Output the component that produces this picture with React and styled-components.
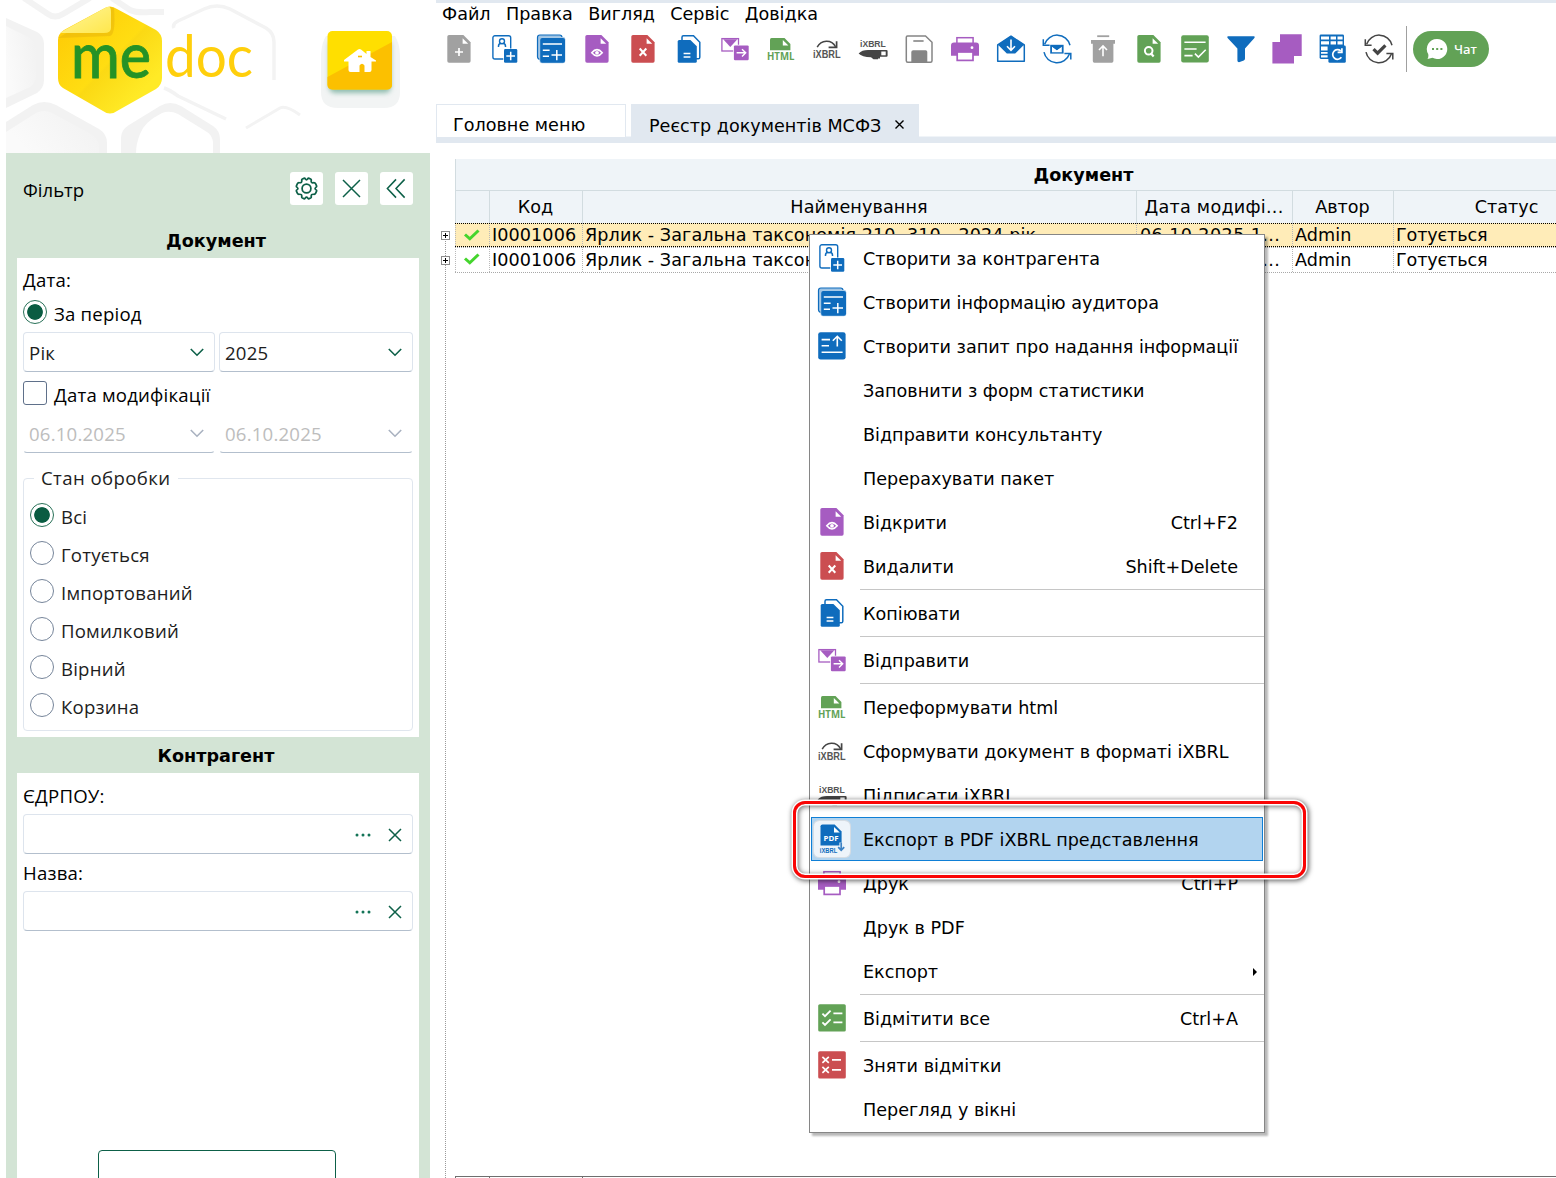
import { useState } from 'react';
import styled, { createGlobalStyle, css } from 'styled-components';

const BLUE = '#0f6cbd';
const PURPLE = '#a65cc1';
const GREEN = '#62a256';
const RED = '#cb4e51';
const GREY = '#a1a1a1';
const DARK = '#454545';

const GlobalStyle = createGlobalStyle`
  * {
    box-sizing: border-box;
  }
  body {
    margin: 0;
    background: #fff;
    color: #000;
    font-family: 'DejaVu Sans', Verdana, sans-serif;
    font-size: 17.6px;
    overflow: hidden;
  }
  button {
    font: inherit;
    padding: 0;
    cursor: pointer;
  }
`;

const Page = styled.div`
  display: flex;
  width: 1556px;
  height: 1178px;
  overflow: hidden;
  position: relative;
`;

/* ---------- icons ---------- */

const Svg = styled.svg`
  display: block;
  width: 28px;
  height: 28px;
  overflow: visible;
  flex: none;
`;

const Doc = ({ color }) => (
  <>
    <path d='M4 0H18.4L25.6 7.2V26Q25.6 27.7 24 27.7H4Q2.3 27.7 2.3 26V1.8Q2.3 0 4 0Z' fill={color} />
    <path d='M17.6 3.2V8.7H23.2Z' fill='#fff' />
  </>
);

const SyncArcs = ({ color }) => (
  <g fill='none' stroke={color} strokeWidth='1.5'>
    <path d='M1.6 9.3A13.2 13.2 0 0 1 27 10.2' />
    <path d='M.3 4.3V10.3H6.6' />
    <path d='M1 17.2A13.2 13.2 0 0 0 26.4 19' />
    <path d='M27.8 24.4V18.4H21.4' />
  </g>
);

const icons = {
  newDoc: (
    <>
      <Doc color={GREY} />
      <path d='M14 13V21M10 17H18' stroke='#fff' strokeWidth='1.7' />
    </>
  ),
  contact: (
    <>
      <rect x='1.9' y='.8' width='17.8' height='23.2' rx='2' fill='#fff' stroke={BLUE} strokeWidth='1.4' />
      <circle cx='11' cy='6.3' r='2.5' fill='none' stroke={BLUE} strokeWidth='1.4' />
      <path d='M7.5 12V11.2Q7.5 8.8 9.7 8.6M14.5 12V11.2Q14.5 8.8 12.3 8.6' fill='none' stroke={BLUE} strokeWidth='1.5' />
      <rect x='12.3' y='13.4' width='14.4' height='14.8' rx='1.5' fill='#fff' />
      <rect x='13' y='14.1' width='13.3' height='13.6' rx='1.3' fill={BLUE} />
      <path d='M19.7 16.7V25.3M15.3 21H24' stroke='#fff' strokeWidth='1.5' />
    </>
  ),
  auditor: (
    <>
      <rect x='.5' y='0' width='24.5' height='24.2' rx='2.4' fill='#9fc4e4' stroke={BLUE} strokeWidth='1.2' />
      <rect x='2.4' y='2' width='26' height='26.200' rx='2.4' fill='#a8cae7' />
      <rect x='3.2' y='2.9' width='24.8' height='24.9' rx='2' fill={BLUE} />
      <path d='M5.8 9H25M5.8 15.2H12.6M5.8 21.2H12M14.5 20H25M19.8 15V25.2' stroke='#fff' strokeWidth='1.5' />
    </>
  ),
  request: (
    <>
      <rect x='.2' y='.2' width='27.4' height='27.4' rx='2.4' fill={BLUE} />
      <path d='M3.6 7.6H12M3.6 13.8H11M3.6 20.2H24.6M19.3 14.5V4.6M14.8 8.8L19.3 4.3L23.8 8.8' fill='none' stroke='#fff' strokeWidth='1.6' />
    </>
  ),
  view: (
    <>
      <Doc color={PURPLE} />
      <path d='M8.8 17.8Q14 11.4 19.2 17.8Q14 24.200 8.8 17.8Z' fill='none' stroke='#fff' strokeWidth='1.6' />
      <circle cx='14' cy='17.8' r='1.9' fill='#fff' />
    </>
  ),
  remove: (
    <>
      <Doc color={RED} />
      <path d='M10.7 13.5L17.3 20.7M17.3 13.5L10.7 20.7' stroke='#fff' strokeWidth='2' />
    </>
  ),
  copy: (
    <>
      <path d='M7 5V2.2Q7 .8 8.4 .8H18.5L24.8 7.2V22.2Q24.8 23.8 23.3 23.8H21' fill='none' stroke={BLUE} strokeWidth='1.5' />
      <path d='M4.2 5H15.4L21.8 11.2V26.3Q21.8 27.8 20.4 27.8H4.2Q2.7 27.8 2.7 26.3V6.5Q2.7 5 4.2 5Z' fill={BLUE} />
      <path d='M8.6 18.4H15.4M8.6 21.9H15.4' stroke='#fff' strokeWidth='1.5' />
    </>
  ),
  send: (
    <>
      <rect x='.9' y='3.6' width='16.6' height='12.4' fill='#fff' stroke={PURPLE} strokeWidth='1.3' />
      <path d='M2.2 4.2H16.4L9.3 12Z' fill={PURPLE} />
      <rect x='12.2' y='9.8' width='16' height='16' rx='1.4' fill='#fff' />
      <rect x='12.9' y='10.4' width='14.8' height='14.8' rx='1.2' fill={PURPLE} />
      <path d='M15.6 17.8H24.5M21 14.2L24.7 17.8L21 21.4' fill='none' stroke='#fff' strokeWidth='1.4' />
    </>
  ),
  html: (
    <>
      <path d='M4.5 3H17.5L23.4 9V15.2H3V4.5Q3 3 4.5 3Z' fill={GREEN} />
      <path d='M15.8 5V10.4H21.4Z' fill='#fff' />
      <text x='0' y='25.4' textLength='27.4' lengthAdjust='spacingAndGlyphs' fontFamily='Open Sans, sans-serif' fontSize='9.8' fontWeight='700' fill={GREEN}>HTML</text>
    </>
  ),
  ixbrl: (
    <>
      <path d='M4.2 12.2C8 4.6 18.5 4 22.6 11.8' fill='none' stroke={DARK} strokeWidth='1.5' />
      <path d='M23.6 6.2V12.4H15.6' fill='none' stroke={DARK} strokeWidth='1.7' />
      <text x='0' y='22.8' textLength='27.6' lengthAdjust='spacingAndGlyphs' fontFamily='Liberation Sans, sans-serif' fontSize='10.2' fontWeight='700' fill='#555'>iXBRL</text>
    </>
  ),
  sign: (
    <>
      <text x='1' y='11.7' textLength='25.8' lengthAdjust='spacingAndGlyphs' fontFamily='Liberation Sans, sans-serif' fontSize='9.4' fontWeight='700' fill='#555'>iXBRL</text>
      <path d='M-.4 18.4Q3 15 9 15H27.5Q28.6 15 28.6 16V20.8Q28.6 21.800 27.5 21.800H21V23.4H19V24.2H14.5L12 22.200Q3 22 -.4 18.400Z' fill={DARK} />
      <rect x='22.3' y='16.5' width='4.4' height='3.8' fill='#fff' />
    </>
  ),
  save: (
    <>
      <path d='M2.5 .9H20.5L27 7.2V25.7Q27 27.2 25.5 27.2H2.8Q1.3 27.2 1.3 25.7V2.2Q1.3 .9 2.5 .9Z' fill='#fff' stroke='#858585' strokeWidth='1.5' />
      <path d='M8.3 6H18.6' stroke='#858585' strokeWidth='1.6' />
      <path d='M8.2 15.2H20.6Q22.3 15.2 22.3 17V27H6.3V17Q6.3 15.2 8.2 15.2Z' fill='#858585' />
    </>
  ),
  print: (
    <>
      <rect x='5.9' y='2.7' width='16.2' height='8' fill='#fff' stroke={PURPLE} strokeWidth='1.5' />
      <path d='M3 7.4H25Q28 7.4 28 10.4V20.8H0V10.4Q0 7.4 3 7.4Z' fill={PURPLE} />
      <rect x='6.2' y='17' width='15.8' height='8.4' fill='#fff' stroke={PURPLE} strokeWidth='1.7' />
      <circle cx='21' cy='12.7' r='1.4' fill='#fff' />
    </>
  ),
  inbox: (
    <>
      <path d='M.7 10L14 1.2L27.3 10V26.2H.7Z' fill='#fff' stroke={BLUE} strokeWidth='1.5' strokeLinejoin='round' />
      <path d='M1 9.8L14 .8L27 9.8L18.2 18.6H9.8Z' fill={BLUE} />
      <path d='M14 4.5V15M10 11.3L14 15.3L18 11.3' fill='none' stroke='#fff' strokeWidth='1.6' />
    </>
  ),
  mailSync: (
    <>
      <SyncArcs color={BLUE} />
      <rect x='7.2' y='9.8' width='13.4' height='8.8' fill={BLUE} />
      <path d='M9 17.2V11.8L13.9 15.2L18.8 11.8V17.2Z' fill='#fff' />
      <path d='M9 11.2H18.8L13.9 15Z' fill={BLUE} />
    </>
  ),
  restore: (
    <>
      <path d='M8.2 1.2H20.2' stroke={GREY} strokeWidth='1.8' />
      <path d='M2 5H26V8.8H24.4V26Q24.4 27.7 22.8 27.7H5.4Q3.8 27.7 3.8 26V8.8H2Z' fill={GREY} />
      <path d='M14 21.3V11.5M10 15L14 11L18 15' fill='none' stroke='#fff' strokeWidth='1.6' />
    </>
  ),
  find: (
    <>
      <Doc color={GREEN} />
      <circle cx='13.7' cy='15.8' r='3.8' fill='none' stroke='#fff' strokeWidth='2' />
      <path d='M15.6 18L18.6 21.4' stroke='#fff' strokeWidth='2.2' />
    </>
  ),
  verify: (
    <>
      <rect x='.2' y='.2' width='27.6' height='27.4' rx='2' fill={GREEN} />
      <path d='M3.4 7.3H24.6M3.4 14H15.6M3.4 20.6H11.6M13.9 18.6L17.4 22.1L24.7 14.8' fill='none' stroke='#fff' strokeWidth='1.6' />
    </>
  ),
  filter: <path d='M.8 1.2H27.2Q28.2 2 27.4 3L18 13.6V23.6Q18 25 16.8 25.6L12 27.3Q10.4 27.3 10.4 25.6V13.6L.6 3Q-.2 2 .8 1.2Z' fill={BLUE} />,
  layers: <path d='M7-.8H28.7V21H21V28.6H-.6V7H7Z' fill={PURPLE} />,
  gridSync: (
    <>
      <rect x='.6' y='-.6' width='24.4' height='24.6' rx='1.4' fill={BLUE} />
      <path d='M2 1.4H10V4.4H2ZM11.6 1.4H17V4.4H11.6ZM18.5 1.4H23.6V4.4H18.5ZM2 6.2H10V9.6H2ZM11.6 6.2H17V9.6H11.6ZM18.5 6.2H23.6V9.6H18.5ZM2 11.6H8.6V15.4H2ZM2 17H8.6V18.8H2ZM2 20.2H8.6V22.6H2Z' fill='#fff' />
      <rect x='9.4' y='10.6' width='17.4' height='17.2' rx='1.4' fill={BLUE} />
      <path d='M22.4 22.3A4.8 4.8 0 1 1 21.7 15.9M22.9 13.2V17.4H18.6' fill='none' stroke='#fff' strokeWidth='1.7' />
    </>
  ),
  checkSync: (
    <>
      <SyncArcs color={DARK} />
      <path d='M8.5 14.2L12.6 18.2L20.4 10.4' fill='none' stroke={DARK} strokeWidth='3.2' />
    </>
  ),
  pdf: (
    <>
      <path d='M4.5-.6H16.6L23.6 6.6V20.6H2.5V1.2Q2.5-.6 4.5-.6Z' fill={BLUE} />
      <path d='M16 2V7.4H21.8Z' fill='#fff' />
      <text x='5.6' y='15.9' textLength='15' lengthAdjust='spacingAndGlyphs' fontFamily='Open Sans, sans-serif' fontSize='7.8' fontWeight='700' fill='#fff'>PDF</text>
      <text x='1.8' y='27.7' textLength='17.4' lengthAdjust='spacingAndGlyphs' fontFamily='Liberation Sans, sans-serif' fontSize='6.8' fontWeight='700' fill={BLUE}>iXBRL</text>
      <path d='M23.2 17.5V24.6M20.2 22.2L23.2 25.2L26.2 22.2' fill='none' stroke='#eef4fa' strokeWidth='3.6' />
      <path d='M23.2 17.5V24.6M20.2 22.2L23.2 25.2L26.2 22.2' fill='none' stroke='#3d82c4' strokeWidth='1.7' />
    </>
  ),
  checkAll: (
    <>
      <rect x='.2' y='.2' width='27.6' height='27.4' rx='1.6' fill={GREEN} />
      <path d='M4.4 9.6L7 12.2L12.6 6.6M4.4 18.4L7 21L12.6 15.4M15.4 9.4H24.4M15.4 18.4H24.4' fill='none' stroke='#fff' strokeWidth='1.8' />
    </>
  ),
  uncheckAll: (
    <>
      <rect x='.2' y='.2' width='27.6' height='27.4' rx='1.6' fill={RED} />
      <path d='M4.4 5.8L10.8 11.8M10.8 5.8L4.4 11.8M4.4 15.8L10.8 21.8M10.8 15.8L4.4 21.8M14 8.9H23M14 18.9H23' fill='none' stroke='#fff' strokeWidth='1.7' />
    </>
  ),
};

const Icon = ({ name }) => <Svg viewBox='0 0 28 28'>{icons[name]}</Svg>;

/* ---------- left side ---------- */

const Side = styled.aside`
  width: 424px;
  margin: 0 6px;
  display: flex;
  flex-direction: column;
  flex: none;
`;

const Brand = styled.div`
  height: 153px;
  flex: none;
  display: flex;

  svg {
    display: block;
  }
`;

const FilterPanel = styled.section`
  flex: 1;
  background: #d3e4d5;
  padding: 0 11px;
  display: flex;
  flex-direction: column;
  font-family: 'Open Sans', 'Noto Sans', sans-serif;
  font-size: 18.6px;
  letter-spacing: 0.2px;
`;

const FilterHead = styled.div`
  height: 70px;
  display: flex;
  align-items: center;
  gap: 12px;
  padding: 0 6px;

  span {
    flex: 1;
    padding-top: 2px;
    letter-spacing: 0;
  }
`;

const SquareButton = styled.button`
  width: 33px;
  height: 33px;
  border: 0;
  border-radius: 3px;
  background: #fff;
  display: grid;
  place-items: center;
`;

const GroupTitle = styled.h3`
  margin: 0;
  padding-right: 4px;
  height: ${(props) => props.$height}px;
  line-height: ${(props) => props.$height + 2}px;
  letter-spacing: 0;
  text-align: center;
  font-family: 'DejaVu Sans', Verdana, sans-serif;
  font-size: 17.6px;
  font-weight: 700;
`;

const Group = styled.div`
  background: #fff;
  height: ${(props) => (props.$height ? `${props.$height}px` : 'auto')};
  flex: ${(props) => (props.$height ? 'none' : 1)};
  padding: 4px 6px 0;
  display: flex;
  flex-direction: column;
`;

const Label = styled.div`
  height: 37px;
  line-height: ${(props) => props.$line || 38}px;
`;

const Option = styled.label`
  display: flex;
  align-items: center;
  gap: 7px;
  height: ${(props) => props.$height || 38}px;
  margin-bottom: ${(props) => props.$gap || 0}px;
  color: ${(props) => props.$color || '#1d1d1d'};
  cursor: pointer;

  span {
    padding-top: ${(props) => props.$drop || 2}px;
  }
`;

const Radio = styled.i`
  width: 24px;
  height: 24px;
  border-radius: 50%;
  border: 1.5px solid ${(props) => (props.$on ? '#2a7259' : '#76859a')};
  background: ${(props) => (props.$on ? 'radial-gradient(circle, #0a5c42 7.4px, #fff 8.2px)' : '#fff')};
`;

const Checkbox = styled.i`
  width: 24px;
  height: 24px;
  border: 1px solid #5f708a;
  border-radius: 3px;
  background: #fff;
`;

const Pair = styled.div`
  display: flex;
  gap: 4px;
`;

const Field = styled.div`
  height: 40px;
  width: ${(props) => props.$width || 390}px;
  flex: none;
  display: flex;
  align-items: center;
  justify-content: space-between;
  padding: 1px 8px 0 5px;
  border: 1px solid #dde4ed;
  border-bottom-color: #b3bfcd;
  border-radius: 4px;
  color: #1d1d1d;

  ${(props) =>
    props.$disabled &&
    css`
      border-color: transparent transparent #b3bfcd;
      color: #bdbdbd;
    `}
`;

const FieldTools = styled.div`
  margin-left: auto;
  display: flex;
  align-items: center;
  gap: 14px;
`;

const Fieldset = styled.fieldset`
  margin: 13px 0 0;
  width: 390px;
  height: 265px;
  padding: 0 6px;
  border: 1px solid #e0e6ee;
  border-radius: 4px;

  legend {
    padding: 0 8px 0 7px;
    margin-left: 4px;
    color: #1d1d1d;
    line-height: 24px;
    letter-spacing: 0.4px;
  }
  div {
    margin-top: 6px;
  }
`;

const ApplyButton = styled.button`
  width: 238px;
  height: 44px;
  margin: 219px 0 0 75px;
  border: 1px solid #0d6048;
  border-radius: 4px;
  background: #fff;
  flex: none;
`;

const Chevron = ({ color = '#0d6048' }) => (
  <svg width='18' height='18' viewBox='0 0 18 18' fill='none' stroke={color} strokeWidth='1.6'>
    <path d='M2.8 5L9 11.200L15.2 5' />
  </svg>
);

const Cross = ({ size = 18, inset = 3 }) => (
  <svg width={size} height={size} viewBox={`0 0 ${size} ${size}`} stroke='#0d6048' strokeWidth='1.5'>
    <path d={`M${inset} ${inset}L${size - inset} ${size - inset}M${size - inset} ${inset}L${inset} ${size - inset}`} />
  </svg>
);

const Gear = () => (
  <svg width='23' height='23' viewBox='0 0 24 24' fill='none' stroke='#0d6048' strokeWidth='1.8' strokeLinejoin='round'>
    <path d='M9.3 1.4Q10.3 1 10.8 2.1Q12 3.7 13.2 2.1Q13.7 1 14.7 1.4L16.3 2.1Q17.3 2.6 16.9 3.8Q16.6 5.9 18.7 6.1Q20.9 5.6 21.6 7.2L22.5 9.2Q22.9 10.2 21.8 10.8Q20.1 12 21.8 13.2Q22.9 13.8 22.5 14.8L21.6 16.8Q20.9 18.4 19.2 18Q16.8 17.9 16.9 20.2Q17.3 21.4 16.3 21.9L14.7 22.6Q13.7 23 13.2 21.9Q12 20.3 10.8 21.9Q10.3 23 9.3 22.6L7.7 21.9Q6.7 21.4 7.1 20.2Q7.2 17.9 4.8 18Q3.1 18.4 2.4 16.8L1.5 14.8Q1.1 13.8 2.2 13.2Q3.9 12 2.2 10.8Q1.1 10.2 1.5 9.2L2.4 7.2Q3.1 5.6 4.8 6Q7.2 6.1 7.1 3.8Q6.7 2.6 7.7 2.1Z' />
    <circle cx='12' cy='12' r='4.6' />
  </svg>
);

const Dots = () => (
  <svg width='18' height='18' viewBox='0 0 18 18' fill='#147457'>
    <circle cx='3' cy='9' r='1.5' />
    <circle cx='9' cy='9' r='1.5' />
    <circle cx='15' cy='9' r='1.5' />
  </svg>
);

const Logo = () => (
  <svg width='424' height='153' viewBox='6 0 424 153'>
    <defs>
      <linearGradient id='hex' x1='0' y1='0' x2='1' y2='1'>
        <stop offset='0.1' stopColor='#fecb06' />
        <stop offset='0.5' stopColor='#ffdd12' />
        <stop offset='0.52' stopColor='#fbd914' />
        <stop offset='0.8' stopColor='#ffea26' />
      </linearGradient>
      <linearGradient id='fold' x1='0' y1='0' x2='1' y2='1'>
        <stop offset='0.4' stopColor='#fff07c' />
        <stop offset='1' stopColor='#ffe74c' />
      </linearGradient>
      <linearGradient id='fade' x1='1' y1='0' x2='0' y2='0.4'>
        <stop offset='0' stopColor='#f1f1f1' />
        <stop offset='1' stopColor='#fafafa' />
      </linearGradient>
      <filter id='soft' x='-30%' y='-30%' width='160%' height='160%'>
        <feGaussianBlur stdDeviation='2.6' />
      </filter>
    </defs>
    <g fill='none' stroke='#f3f3f3' strokeWidth='6' strokeLinejoin='round'>
      <path d='M24-2L48 14Q55 19 63 14L90-2' />
      <path d='M112-2L130 10Q136 13 150 12H164' />
      <path d='M174 28Q172 24 178 21L204 9Q217 3 230 9L266 28Q274 33 274 42V80' strokeWidth='3.5' />
      <path d='M164 88Q170 90 178 96L226 119' strokeWidth='3.5' />
      <path d='M246 128L280 108Q286 105 300 115' strokeWidth='3' />
    </g>
    <path d='M6 18L37 32Q44 36 44 44V80Q44 88 37 93L6 108Z' fill='#f2f2f2' />
    <path d='M6 26L30 38Q36 42 36 49V76Q36 83 30 87L6 98Z' fill='url(#fade)' />
    <path d='M6 122L33 105Q44 99 56 105L99 129Q107 134 107 143V153H6Z' fill='#f2f2f2' />
    <path d='M6 132L36 113Q44 109 52 113L91 134Q98 138 99 146V153H6Z' fill='url(#fade)' />
    <path d='M121 153V138Q121 130 129 125L160 106Q170 100 181 106L213 126Q220 131 220 139V153H213V142Q212 135 207 132L178 114Q170 110 162 113Q144 122 140 134Q136 144 136 153Z' fill='#f2f2f2' />
    <path d='M103 9Q110 4 117 9L156 30Q162 34 162 41V78Q162 85 156 89L117 111Q110 116 103 111L63 88Q58 85 58 78V40Q58 34 64 30Z' fill='url(#hex)' />
    <path d='M58 38L110 36Q116 34 114 8L110 7Z' fill='#e8b70c' opacity='0.55' />
    <path d='M63 31L105 8Q111 4 111 12V28Q111 33 104 33H60Z' fill='url(#fold)' />
    <text x='71' y='77.5' textLength='80' lengthAdjust='spacingAndGlyphs' fontFamily='Lato, sans-serif' fontSize='64' fontWeight='500' stroke='#259226' strokeWidth='0.8' fill='#259226'>me</text>
    <text x='165' y='77' textLength='88' lengthAdjust='spacingAndGlyphs' fontFamily='Lato, sans-serif' fontSize='58' fill='#ffcf0c'>doc</text>
    <path d='M326 36H395Q400 44 400 56V92Q400 108 384 108H338Q321 108 321 92V54Q322 42 326 36Z' fill='#f2f4f4' />
    <rect x='329' y='40' width='62' height='53' rx='6' fill='#8fbcae' filter='url(#soft)' />
    <rect x='327.5' y='31' width='64.5' height='58.5' rx='5' fill='#ffdf00' />
    <path d='M392 42V84.5Q392 89.5 387 89.5H332.5Q327.5 89.5 327.5 84.5V77Z' fill='#fcc000' />
    <path d='M344 60L358 49.500Q359.500 48.500 361 49.500L366.500 54V51H370.500V57L376 60.500V61.500H371.500V70Q371.500 72 369.500 72H364.500V65.500Q362 62 359.500 65.500V72H350.500Q348.500 72 348.500 70V61.500H344Z' fill='#fff' />
    <path d='M358 56.5H362' stroke='#fcc000' strokeWidth='1.6' />
  </svg>
);

const states = ['Всі', 'Готується', 'Імпортований', 'Помилковий', 'Вірний', 'Корзина'];

/* ---------- main area ---------- */

const Main = styled.main`
  flex: 1;
  min-width: 0;
  display: flex;
  flex-direction: column;
`;

const MenuBar = styled.nav`
  height: 26px;
  flex: none;
  border-top: 3px solid #e1e8f0;
  padding-left: 6px;
  display: flex;
  gap: 15.3px;
  line-height: 22px;
`;

const Toolbar = styled.div`
  height: 46px;
  flex: none;
  padding-left: 9px;
  display: flex;
  align-items: center;
  gap: 18px;
`;

const Chat = styled.div`
  margin-left: -5px;
  height: 46px;
  padding-left: 6px;
  border-left: 1px solid #a0a0a0;
  display: flex;
  align-items: center;
`;

const ChatButton = styled.button`
  width: 76px;
  height: 36px;
  border: 0;
  border-radius: 18px;
  background: ${GREEN};
  color: #fff;
  font-family: 'Noto Sans', sans-serif;
  font-size: 13.2px;
  font-weight: 500;
  display: flex;
  align-items: center;
  gap: 6px;
  padding-left: 13px;
`;

const Tabs = styled.div`
  margin-top: 32px;
  height: 39px;
  flex: none;
  display: flex;
  align-items: flex-start;
  gap: 5px;
  background: linear-gradient(#fff 32px, #f0f4f8 32px, #f0f4f8 33px, #e1e8f0 33px);
`;

const Tab = styled.div`
  width: ${(props) => (props.$active ? 288 : 190)}px;
  height: 33px;
  line-height: ${(props) => (props.$active ? 44 : 40)}px;
  padding-left: ${(props) => (props.$active ? 18 : 16)}px;
  border: ${(props) => (props.$active ? 0 : '1px solid #e1e8f0')};
  border-bottom: 0;
  background: ${(props) => (props.$active ? '#e1e8f0' : '#fff')};
  display: flex;
  gap: 13.5px;

  svg {
    margin-top: 16px;
  }
`;

const Work = styled.div`
  flex: 1;
  padding-top: 16px;
  display: flex;
  overflow: hidden;
`;

const dotted = (dir, color) => css`
  background-image: repeating-linear-gradient(${dir}, ${color} 0 1px, transparent 1px 2px);
`;

const Tree = styled.div`
  width: 19px;
  flex: none;
  padding: 72px 0 0 5px;
  background: repeating-linear-gradient(to bottom, #9a9a9a 0 1px, transparent 1px 2px) 9px 80px / 1px 100% no-repeat;
  display: flex;
  flex-direction: column;
  gap: 16px;
`;

const Expander = styled.i`
  width: 9px;
  height: 9px;
  border: 1px solid #8c8c8c;
  background:
    linear-gradient(#000, #000) center / 5px 1px no-repeat,
    linear-gradient(#000, #000) center / 1px 5px no-repeat,
    #fff;
`;

const Table = styled.div`
  width: 1257px;
  flex: none;
  display: flex;
  flex-direction: column;
`;

const TableTitle = styled.div`
  height: 32px;
  line-height: 33px;
  text-align: center;
  font-weight: 700;
  background: #eff4f8;
  border: 1px solid #d2dce0;
  border-top: 0;
`;

const columns = '34px 93px 554px 156px 101px 227px 1fr';

const HeadRow = styled.div`
  display: grid;
  grid-template-columns: ${columns};
  height: 32px;
  line-height: 33px;
  background: #eff4f8;
  text-align: center;

  span {
    margin-right: 1px;
    border-left: 1px solid #d2dce0;
    white-space: nowrap;
  }
  span:nth-child(3) {
    letter-spacing: 0.1px;
  }
  span:nth-child(4) {
    letter-spacing: 0.26px;
  }
`;

const Row = styled.div`
  display: grid;
  grid-template-columns: ${columns};
  height: ${(props) => (props.$selected ? 24 : 26)}px;
  line-height: ${(props) => (props.$selected ? 24 : 26)}px;
  background: ${(props) => (props.$selected ? '#ffecb8' : '#fff')};
  position: relative;

  &::before,
  &::after {
    content: '';
    position: absolute;
    left: 0;
    right: 0;
    height: 1px;
    ${(props) => dotted('to right', props.$selected ? '#000' : '#a8a8a8')}
  }
  &::before {
    top: 0;
  }
  &::after {
    bottom: 0;
  }

  span {
    padding-left: 3px;
    white-space: nowrap;
    overflow: hidden;
    letter-spacing: 0.08px;
    background: repeating-linear-gradient(to bottom, #b9b9b9 0 1px, transparent 1px 2px) 0 0 / 1px 100% no-repeat;
  }
  span:nth-child(4) {
    padding-left: 4px;
    letter-spacing: 0.4px;
  }
  span:nth-child(6) {
    letter-spacing: -0.15px;
  }
`;

const TableFoot = styled.div`
  margin-top: auto;
  display: grid;
  grid-template-columns: ${columns};
  height: 2px;
  border-top: 1px solid #6e6e6e;

  i {
    border-left: 1px solid #6e6e6e;
  }
`;

/* ---------- context menu ---------- */

const ContextMenu = styled.div`
  position: absolute;
  left: 809px;
  top: 234px;
  width: 456px;
  padding: 1px 0;
  background: #fff;
  border: 1px solid #868686;
  box-shadow: 3px 3px 2px rgba(0, 0, 0, 0.28);
`;

const MenuItem = styled.div`
  height: 44px;
  margin: 0 1px;
  padding: 0 24px 0 6px;
  border: 1px solid ${(props) => (props.$active ? '#0f7fd6' : 'transparent')};
  background: ${(props) => (props.$active ? '#b2d4ef' : 'transparent')};
  display: flex;
  align-items: center;
  cursor: default;
`;

const MenuIcon = styled.span`
  width: 28px;
  height: 28px;
  margin-right: 17px;
  flex: none;

  ${(props) =>
    props.$active &&
    css`
      border-radius: 2px;
      background: #eef4fa;
      box-shadow: 0 0 0 4px #eef4fa, 0 0 0 5px #d6dde4;
    `}
`;

const MenuText = styled.span`
  flex: 1;
  padding-top: 2px;
  white-space: nowrap;
`;

const Shortcut = styled.span`
  padding-top: 2px;
`;

const Divider = styled.div`
  height: 3px;
  margin-left: 50px;
  padding-top: 1px;

  &::after {
    content: '';
    display: block;
    height: 1px;
    background: #c6c6c6;
  }
`;

const SubArrow = styled.i`
  margin: 2px -19px 0 0;
  border: 4px solid transparent;
  border-left: 4px solid #000;
  border-right: 0;
`;

const Callout = styled.div`
  position: absolute;
  left: 793px;
  top: 801px;
  width: 513px;
  height: 77px;
  border: 3px solid #fa0505;
  border-radius: 12px;
  box-shadow:
    0 0 0 1.5px #fff,
    1px 1px 5px 2px rgba(0, 0, 0, 0.6),
    inset 0 0 0 1.5px #fff,
    inset 1px 1px 5px 2px rgba(0, 0, 0, 0.5);
  pointer-events: none;
`;

const tools = [
  'newDoc', 'contact', 'auditor', 'view', 'remove', 'copy', 'send', 'html', 'ixbrl', 'sign', 'save',
  'print', 'inbox', 'mailSync', 'restore', 'find', 'verify', 'filter', 'layers', 'gridSync', 'checkSync',
];

const menu = [
  { text: 'Створити за контрагента', icon: 'contact' },
  { text: 'Створити інформацію аудитора', icon: 'auditor' },
  { text: 'Створити запит про надання інформації', icon: 'request' },
  { text: 'Заповнити з форм статистики' },
  { text: 'Відправити консультанту' },
  { text: 'Перерахувати пакет' },
  { text: 'Відкрити', icon: 'view', keys: 'Ctrl+F2' },
  { text: 'Видалити', icon: 'remove', keys: 'Shift+Delete' },
  null,
  { text: 'Копіювати', icon: 'copy' },
  null,
  { text: 'Відправити', icon: 'send' },
  null,
  { text: 'Переформувати html', icon: 'html' },
  { text: 'Сформувати документ в форматі iXBRL', icon: 'ixbrl' },
  { text: 'Підписати iXBRL', icon: 'sign' },
  { text: 'Експорт в PDF iXBRL представлення', icon: 'pdf', active: true },
  { text: 'Друк', icon: 'print', keys: 'Ctrl+P' },
  { text: 'Друк в PDF' },
  { text: 'Експорт', sub: true },
  null,
  { text: 'Відмітити все', icon: 'checkAll', keys: 'Ctrl+A' },
  null,
  { text: 'Зняти відмітки', icon: 'uncheckAll' },
  { text: 'Перегляд у вікні' },
];

const GreenCheck = () => (
  <svg width='28' height='22' viewBox='0 0 28 22' fill='none' stroke='#45d52d' strokeWidth='3'>
    <path d='M7 11.5L11.800 15.800L20.500 7.500' />
  </svg>
);

const App = () => {
  const [state, setState] = useState('Всі');

  return (
    <Page>
      <GlobalStyle />
      <Side>
        <Brand>
          <Logo />
        </Brand>
        <FilterPanel>
          <FilterHead>
            <span>Фільтр</span>
            <SquareButton>
              <Gear />
            </SquareButton>
            <SquareButton>
              <Cross size={23} inset={3} />
            </SquareButton>
            <SquareButton>
              <svg width='23' height='23' viewBox='0 0 24 24' fill='none' stroke='#0d6048' strokeWidth='1.6'>
                <path d='M11.500 2.500L2.500 12L11.500 21.500M20.500 2.500L11.500 12L20.500 21.500' />
              </svg>
            </SquareButton>
          </FilterHead>
          <GroupTitle $height={35}>Документ</GroupTitle>
          <Group $height={479}>
            <Label $line={35}>Дата:</Label>
            <Option $height={26} $gap={7} $drop={3} $color='#000'>
              <Radio $on />
              <span>За період</span>
            </Option>
            <Pair>
              <Field $width={192}>
                Рік <Chevron />
              </Field>
              <Field $width={194}>
                2025 <Chevron />
              </Field>
            </Pair>
            <Option $height={41} $drop={4} $color='#000'>
              <Checkbox />
              <span>Дата модифікації</span>
            </Option>
            <Pair>
              <Field $width={192} $disabled>
                06.10.2025 <Chevron color='#a9b2c0' />
              </Field>
              <Field $width={194} $disabled>
                06.10.2025 <Chevron color='#a9b2c0' />
              </Field>
            </Pair>
            <Fieldset>
              <legend>Стан обробки</legend>
              <div>
                {states.map((item) => (
                  <Option key={item} onClick={() => setState(item)}>
                    <Radio $on={item === state} />
                    <span>{item}</span>
                  </Option>
                ))}
              </div>
            </Fieldset>
          </Group>
          <GroupTitle $height={36}>Контрагент</GroupTitle>
          <Group>
            <Label>ЄДРПОУ:</Label>
            <Field>
              <FieldTools>
                <Dots />
                <Cross />
              </FieldTools>
            </Field>
            <Label>Назва:</Label>
            <Field>
              <FieldTools>
                <Dots />
                <Cross />
              </FieldTools>
            </Field>
            <ApplyButton />
          </Group>
        </FilterPanel>
      </Side>

      <Main>
        <MenuBar>
          {['Файл', 'Правка', 'Вигляд', 'Сервіс', 'Довідка'].map((item) => (
            <span key={item}>{item}</span>
          ))}
        </MenuBar>
        <Toolbar>
          {tools.map((name) => (
            <Icon key={name} name={name} />
          ))}
          <Chat>
            <ChatButton>
              <svg width='22' height='22' viewBox='0 0 22 22'>
                <path d='M11.2 1A10 10 0 1 1 6.5 19.8L1.5 21Q2.8 19 2.2 16A10 10 0 0 1 11.2 1Z' fill='#fff' />
                <path d='M6 11H8M10.2 11H12.2M14.4 11H16.4' stroke={GREEN} strokeWidth='1.8' />
              </svg>
              Чат
            </ChatButton>
          </Chat>
        </Toolbar>
        <Tabs>
          <Tab>Головне меню</Tab>
          <Tab $active>
            Реєстр документів МСФЗ
            <svg width='9' height='9' viewBox='0 0 9 9' stroke='#000' strokeWidth='1.4'>
              <path d='M.5 .5L8.5 8.5M8.5 .5L.5 8.5' />
            </svg>
          </Tab>
        </Tabs>
        <Work>
          <Tree>
            <Expander />
            <Expander />
          </Tree>
          <Table>
            <TableTitle>Документ</TableTitle>
            <HeadRow>
              <span />
              <span>Код</span>
              <span>Найменування</span>
              <span>Дата модифі...</span>
              <span>Автор</span>
              <span>Статус</span>
            </HeadRow>
            {[true, false].map((selected) => (
              <Row key={String(selected)} $selected={selected}>
                <span>
                  <GreenCheck />
                </span>
                <span>I0001006</span>
                <span>Ярлик - Загальна таксономія 210, 310 - 2024 рік</span>
                <span>06.10.2025 1...</span>
                <span>Admin</span>
                <span>Готується</span>
              </Row>
            ))}
            <TableFoot>
              <i />
              <i />
              <i />
            </TableFoot>
          </Table>
        </Work>
      </Main>

      <ContextMenu>
        {menu.map((item, index) =>
          item ? (
            <MenuItem key={item.text} $active={item.active}>
              <MenuIcon $active={item.active}>{item.icon && <Icon name={item.icon} />}</MenuIcon>
              <MenuText>{item.text}</MenuText>
              {item.keys && <Shortcut>{item.keys}</Shortcut>}
              {item.sub && <SubArrow />}
            </MenuItem>
          ) : (
            <Divider key={index} />
          )
        )}
      </ContextMenu>
      <Callout />
    </Page>
  );
};

export default App;
